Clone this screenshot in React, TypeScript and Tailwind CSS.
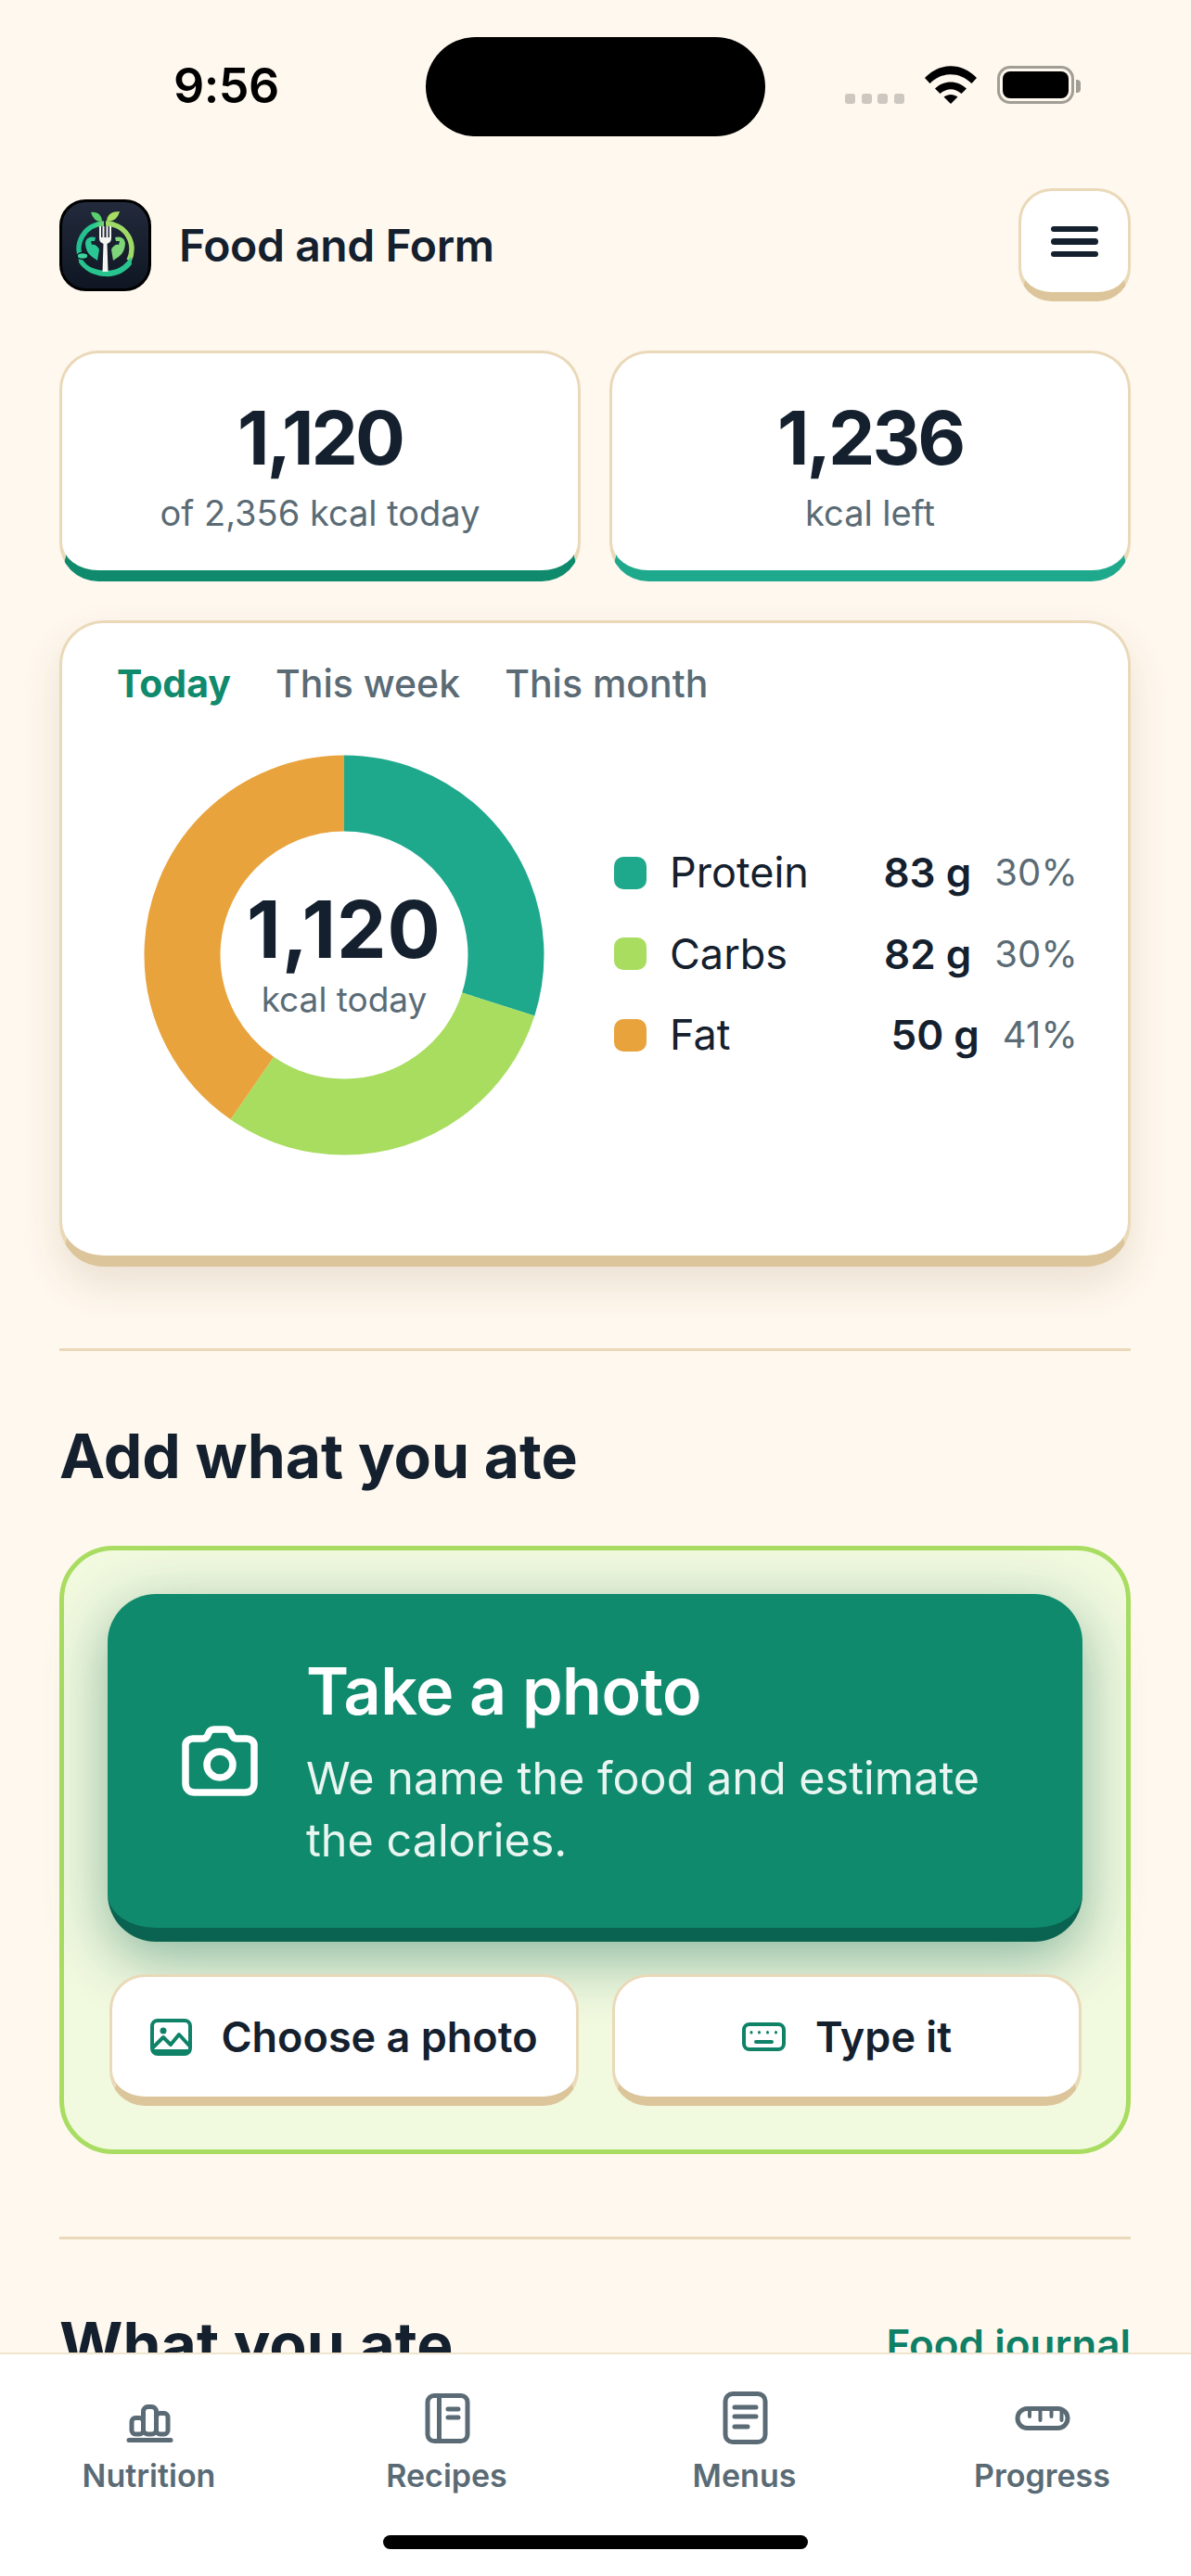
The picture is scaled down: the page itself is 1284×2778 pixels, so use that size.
import React from "react";

const sans = "font-['Inter','Noto_Sans',sans-serif]";

function Wifi() {
  return (
    <svg width="56" height="41" viewBox="0 0 56 41" className="block">
      <path d="M0 13 C16 -4 40 -4 56 13 L50.500 19 C37 6 19 6 5.500 19 Z" fill="#000" />
      <path d="M11 24.500 C21 15 35 15 45 24.500 L39.500 30 C32 23.500 24 23.500 16.500 30 Z" fill="#000" />
      <path d="M20.500 33.500 C25 30 31 30 35.500 33.500 L28 41 Z" fill="#000" />
    </svg>
  );
}

function Logo() {
  return (
    <svg width="99" height="99" viewBox="0 0 99 99" className="block shrink-0">
      <defs>
        <linearGradient id="ring" x1="0" y1="0" x2="1" y2="0.4">
          <stop offset="0" stopColor="#1fb98c" />
          <stop offset="0.55" stopColor="#28c990" />
          <stop offset="1" stopColor="#a8dd62" />
        </linearGradient>
        <linearGradient id="bg" x1="0" y1="0" x2="0" y2="1">
          <stop offset="0" stopColor="#222a3c" />
          <stop offset="1" stopColor="#0f1622" />
        </linearGradient>
      </defs>
      <rect x="1.500" y="1.500" width="96" height="96" rx="27" fill="url(#bg)" stroke="#000" strokeWidth="3" />
      <path d="M46 24 C38 24 36 19 34 14 C41 13 46 17 46 24 Z" fill="#5bcf6e" />
      <path d="M51 24 C51 16 57 13 65 13 C63 20 59 24 51 24 Z" fill="#a8dd62" />
      <path d="M24 66 A27.500 27.500 0 0 1 48 26" fill="none" stroke="url(#ring)" strokeWidth="5.500" />
      <path d="M50 26 A27.500 27.500 0 0 1 75 66" fill="none" stroke="#a0da66" strokeWidth="5.500" />
      <path d="M22 60 C28 72 36 76 50 77 C62 77 70 72 77 62 L78 70 C70 80 60 84 48 83 C36 82 26 76 21 68 Z" fill="#27c48f" />
      <ellipse cx="25" cy="61" rx="6" ry="3.500" fill="#3bd49b" stroke="#0f1622" strokeWidth="1.500" />
      <path d="M28 48 C28 42 33 39 39 41 L38 45 L34 45 L35 49 C38 48 41 50 43 54 L41 66 C36 62 29 60 28 48 Z" fill="#2ac795" />
      <path d="M71 48 C71 42 66 39 60 41 L61 45 L65 45 L64 49 C61 48 58 50 56 54 L58 66 C63 62 70 60 71 48 Z" fill="#7fd57a" />
      <path d="M43 29 V42 C43 46 46 47 47.500 48 L46.500 78 H52.500 L51.500 48 C53 47 56 46 56 42 V29 H54 V41 H52.500 V29 H50.500 V41 H48.500 V29 H46.500 V41 H45 V29 Z" fill="#f4f5f2" />
    </svg>
  );
}

function Camera() {
  return (
    <svg width="82" height="76" viewBox="0 0 82 76" fill="none" stroke="#fff" strokeWidth="7.500" strokeLinejoin="round" className="block">
      <path d="M12 14 H23 C27 14 28 11 29 8 C30 5 32 4 35 4 H47 C50 4 52 5 53 8 C54 11 55 14 59 14 H70 C74 14 78 17 78 21 V62 C78 68 74 72 68 72 H14 C8 72 4 68 4 62 V21 C4 17 8 14 12 14 Z" />
      <circle cx="41" cy="42" r="14" />
    </svg>
  );
}

function ImageIcon() {
  return (
    <svg width="45" height="40" viewBox="0 0 45 40" fill="none" stroke="#0f8268" strokeWidth="4" strokeLinejoin="round" strokeLinecap="round" className="block">
      <rect x="2" y="2" width="41" height="36" rx="6" />
      <circle cx="14" cy="13" r="2.500" fill="#0f8268" strokeWidth="2" />
      <path d="M3 31 L14 20 L22 28 L31 17 L42 29" />
      <path d="M3 35 H42" strokeWidth="4" />
    </svg>
  );
}

function KeyboardIcon() {
  return (
    <svg width="47" height="31" viewBox="0 0 47 31" fill="none" stroke="#0f8268" strokeWidth="4" strokeLinecap="round" className="block">
      <rect x="2" y="2" width="43" height="27" rx="6" />
      <path d="M10 10.500 V11 M18.500 10.500 V11 M27.500 10.500 V11 M36.500 10.500 V11" strokeWidth="3" />
      <path d="M15 21 H32" strokeWidth="4" />
    </svg>
  );
}

function NavIcon({ name }: { name: string }) {
  const c = { fill: "none", stroke: "#5a6b75", strokeWidth: 5, strokeLinecap: "round" as const, strokeLinejoin: "round" as const };
  return (
    <svg width="60" height="60" viewBox="0 0 60 60" className="block" {...c}>
      {name === "Nutrition" && (
        <>
          <rect x="11" y="29.500" width="12.500" height="17.500" rx="4" />
          <rect x="23.500" y="17.500" width="14" height="29.500" rx="5" />
          <rect x="37.500" y="24.500" width="12.500" height="22.500" rx="4" />
          <path d="M8 53.500 H53" />
        </>
      )}
      {name === "Recipes" && (
        <>
          <rect x="9" y="5.500" width="43" height="49" rx="7" />
          <path d="M21.500 6 V54" strokeLinecap="butt" />
          <path d="M31 20 H42 M31 29 H42" />
        </>
      )}
      {name === "Menus" && (
        <>
          <rect x="9" y="3.500" width="43" height="52" rx="8" />
          <path d="M19 18 H42 M19 28 H42 M19 39 H33" />
        </>
      )}
      {name === "Progress" && (
        <>
          <rect x="3" y="19.500" width="54" height="21" rx="10.500" />
          <path d="M16 21 V28 M27.500 21 V32 M39.500 21 V28 M50.500 21 V32" strokeWidth="4" />
        </>
      )}
    </svg>
  );
}

function Donut() {
  const R = 174.5;
  const C = 2 * Math.PI * R;
  const segs = [
    { color: "#1fa98c", from: 0, to: 0.299 },
    { color: "#a8dd5f", from: 0.299, to: 0.596 },
    { color: "#e8a33d", from: 0.596, to: 1 },
  ];
  return (
    <svg width="432" height="432" viewBox="0 0 432 432" className="block" fill="none">
      {segs.map((s) => (
        <circle
          key={s.color}
          cx="216"
          cy="216"
          r={R}
          stroke={s.color}
          strokeWidth="82"
          strokeDasharray={`${(s.to - s.from) * C} ${C}`}
          strokeDashoffset={-s.from * C}
          transform="rotate(-90 216 216)"
        />
      ))}
    </svg>
  );
}

function Stat({ value, label, border }: { value: string; label: string; border: string }) {
  return (
    <div className={`h-[249px] rounded-[42px] bg-white border-[3px] border-b-[12px] border-[#ead9b9] ${border} flex flex-col items-center pt-[51px]`}>
      <div className="text-[80px] leading-[80px] font-bold tracking-[-3px] text-[#14202e]">{value}</div>
      <div className="mt-[18px] text-[38px] leading-[46px] text-[#5a6b75]">{label}</div>
    </div>
  );
}

function Legend({ color, label, value, pct }: { color: string; label: string; value: string; pct: string }) {
  return (
    <div className="h-[87.500px] flex items-center">
      <span className={`w-[35px] h-[35px] rounded-[10px] ${color}`} />
      <span className="ml-[25px] text-[45px] text-[#14202e]">{label}</span>
      <span className="ml-auto text-[44px] font-semibold tracking-[0px] text-[#14202e]">{value}</span>
      <span className="ml-[25px] text-[40px] tracking-[0.2px] text-[#5a6b75]">{pct}</span>
    </div>
  );
}

function SmallButton({ icon, label, gap }: { icon: React.ReactNode; label: string; gap: string }) {
  return (
    <div className={`h-[142px] rounded-[38px] bg-white border-[3px] border-b-[10px] border-[#ead9b9] border-b-[#dcc59a] flex items-center justify-center ${gap}`}>
      {icon}
      <span className="text-[45px] font-semibold text-[#14202e]">{label}</span>
    </div>
  );
}

export default function App() {
  return (
    <div className={`w-[1284px] h-[2778px] flex flex-col overflow-hidden bg-[#fff8ee] ${sans}`}>
      {/* status bar */}
      <div className="h-[203px] shrink-0 flex items-start pl-[187px]">
        <div className="w-[272px] pt-[62px] text-[52px] leading-[62px] font-semibold tracking-[-0.5px] text-black">9:56</div>
        <div className="mt-[40px] w-[366px] h-[107px] rounded-full bg-black" />
        <div className="mt-[71px] ml-[86px] h-[41px] flex items-end">
          <div className="flex gap-[6.500px]">
            {[0, 1, 2, 3].map((i) => (
              <span key={i} className="w-[11px] h-[11px] rounded-[3px] bg-[#cdc8bf]" />
            ))}
          </div>
          <div className="ml-[22px]"><Wifi /></div>
          <div className="ml-[22px] w-[83px] h-[41px] rounded-[14px] border-[3px] border-[#a19e96] p-[3px]">
            <div className="w-full h-full rounded-[8px] bg-black" />
          </div>
          <div className="ml-[2px] mb-[12px] w-[5px] h-[14px] rounded-r-[4px] bg-[#a19e96]" />
        </div>
      </div>

      {/* scrolling content */}
      <div className="flex-1 min-h-0 overflow-hidden pl-[64px] pr-[65px]">
        <div className="h-[122px] flex items-center justify-between">
          <div className="flex items-center gap-[30px]">
            <Logo />
            <span className="pt-[1px] text-[48px] font-semibold tracking-[-0.4px] text-[#14202e]">Food and Form</span>
          </div>
          <div className="w-[121px] h-[122px] rounded-[36px] bg-white border-[3px] border-b-[10px] border-[#ead9b9] border-b-[#dcc59a] flex flex-col items-center justify-center gap-[7px]">
            <span className="w-[51px] h-[6.500px] rounded-full bg-[#14202e]" />
            <span className="w-[51px] h-[6.500px] rounded-full bg-[#14202e]" />
            <span className="w-[51px] h-[6.500px] rounded-full bg-[#14202e]" />
          </div>
        </div>

        <div className="mt-[53px] grid grid-cols-2 gap-[31px]">
          <Stat value="1,120" label="of 2,356 kcal today" border="border-b-[#0f8a6d]" />
          <Stat value="1,236" label="kcal left" border="border-b-[#1fa98c]" />
        </div>

        {/* chart card */}
        <div className="mt-[42px] h-[697px] rounded-[48px] bg-white border-[3px] border-b-[12px] border-[#ead9b9] border-b-[#dcc59a] shadow-[0_20px_44px_rgba(90,60,20,0.12)] pt-[37px] pl-[59px] pr-[54px]">
          <div className="flex gap-[48px] text-[41px] leading-[56px] font-medium text-[#5a6b75]">
            <span className="font-bold text-[#0f8a6d]">Today</span>
            <span>This week</span>
            <span>This month</span>
          </div>
          <div className="mt-[49px] ml-[29px] flex items-center">
            <div className="relative w-[432px] h-[432px] shrink-0">
              <Donut />
              <div className="absolute inset-0 flex flex-col items-center justify-center">
                <div className="text-[85px] leading-[86px] font-bold tracking-[1px] text-[#14202e]">1,120</div>
                <div className="mt-[9px] text-[37px] leading-[46px] text-[#5a6b75]">kcal today</div>
              </div>
            </div>
            <div className="ml-[75px] mt-[-3px] flex-1">
              <Legend color="bg-[#1fa98c]" label="Protein" value="83 g" pct="30%" />
              <Legend color="bg-[#a8dd5f]" label="Carbs" value="82 g" pct="30%" />
              <Legend color="bg-[#e8a33d]" label="Fat" value="50 g" pct="41%" />
            </div>
          </div>
        </div>

        <div className="mt-[88px] h-[3px] bg-[#ead9b9]" />

        <h2 className="mt-[73px] text-[66px] leading-[80px] font-bold tracking-[0px] text-[#14202e]">Add what you ate</h2>

        {/* add card */}
        <div className="mt-[57px] h-[656px] rounded-[58px] bg-[#f1f9df] border-[5px] border-[#a8dd62] px-[47px] pt-[47px]">
          <div className="h-[375px] rounded-[52px] bg-[#0f8a6d] border-b-[15px] border-b-[#0a6350] shadow-[0_18px_64px_rgba(10,99,80,0.45)] flex items-center pl-[80px]">
            <Camera />
            <div className="ml-[52px] pt-[4px]">
              <div className="text-[70px] leading-[80px] font-semibold tracking-[-0.5px] text-white">Take a photo</div>
              <div className="mt-[20px] text-[48.500px] leading-[67px] text-[#e9f5f0]">
                We name the food and estimate
                <br />
                the calories.
              </div>
            </div>
          </div>
          <div className="mt-[35px] pl-[2px] pr-[1px] grid grid-cols-2 gap-[36px]">
            <SmallButton icon={<ImageIcon />} label="Choose a photo" gap="gap-[31px]" />
            <SmallButton icon={<KeyboardIcon />} label="Type it" gap="gap-[32px]" />
          </div>
        </div>

        <div className="mt-[89px] h-[3px] bg-[#ead9b9]" />

        <div className="mt-[73px] flex items-center justify-between">
          <h2 className="text-[66px] leading-[80px] font-bold tracking-[0px] text-[#14202e]">What you ate</h2>
          <span className="text-[44px] font-semibold text-[#0f7f66]">Food journal</span>
        </div>
      </div>

      {/* tab bar */}
      <div className="h-[241px] shrink-0 bg-white border-t-2 border-[#efe4cd] flex flex-col">
        <div className="grid grid-cols-4 pt-[39px]">
          {["Nutrition", "Recipes", "Menus", "Progress"].map((n) => (
            <div key={n} className="flex flex-col items-center">
              <NavIcon name={n} />
              <span className="mt-[8px] text-[34px] leading-[48px] font-semibold text-[#5a6b75]">{n}</span>
            </div>
          ))}
        </div>
        <div className="mt-[40px] mx-auto w-[458px] h-[15px] rounded-full bg-black" />
      </div>
    </div>
  );
}
